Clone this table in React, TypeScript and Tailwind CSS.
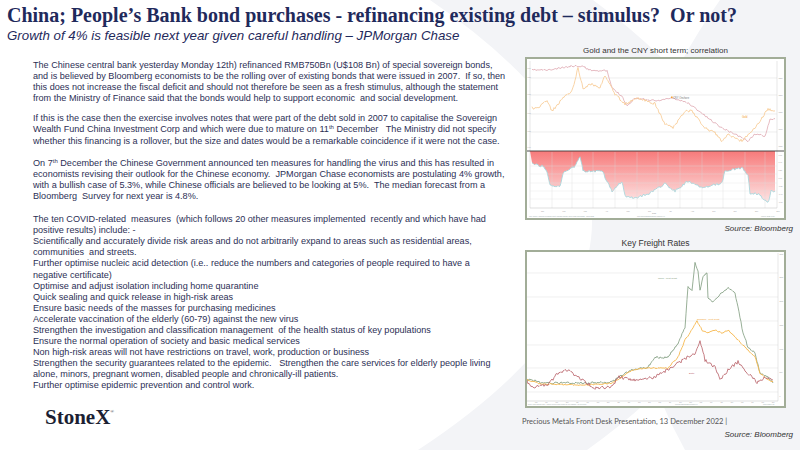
import React from 'react';

type Pt = [number, number];

// deterministic noise so the chart lines look like market data
function rng(seed: number) {
  let s = seed;
  return () => {
    s = (s * 16807) % 2147483647;
    return s / 2147483647;
  };
}

function series(pts: Pt[], amp: number, seed: number, step = 1): string {
  const r = rng(seed);
  const out: string[] = [];
  for (let i = 0; i < pts.length - 1; i++) {
    const [x0, y0] = pts[i];
    const [x1, y1] = pts[i + 1];
    const n = Math.max(1, Math.round((x1 - x0) / step));
    for (let k = 0; k < n; k++) {
      const t = k / n;
      const x = x0 + (x1 - x0) * t;
      const y = y0 + (y1 - y0) * t + (r() - 0.5) * amp * 2;
      out.push(`${x.toFixed(1)},${y.toFixed(1)}`);
    }
  }
  const last = pts[pts.length - 1];
  out.push(`${last[0]},${last[1]}`);
  return out.join(' ');
}

const cnyPts: Pt[] = [
  [7, 13], [25, 13], [47, 9], [57, 9], [65, 13], [82, 14], [87, 31], [97, 39], [102, 49], [110, 41],
  [130, 44], [147, 41], [163, 46], [170, 51], [183, 61], [197, 71], [210, 77], [223, 84], [230, 77],
  [240, 79], [245, 62], [250, 62],
];
const goldPts: Pt[] = [
  [7, 51], [13, 51], [22, 44], [27, 54], [40, 39], [47, 34], [53, 11], [58, 31], [67, 27], [75, 31],
  [80, 19], [90, 37], [100, 47], [113, 41], [130, 47], [140, 67], [148, 71], [160, 54], [167, 54],
  [180, 71], [190, 76], [197, 84], [203, 77], [217, 84], [227, 74], [233, 67], [243, 52], [250, 54],
];
const corrPts: Pt[] = [
  [7, 107], [17, 109], [22, 114], [25, 129], [35, 129], [38, 116], [50, 109], [55, 99], [58, 114],
  [77, 114], [87, 134], [97, 124], [100, 139], [110, 141], [123, 137], [140, 127], [150, 134],
  [163, 124], [177, 131], [197, 126], [200, 114], [217, 111], [223, 118], [225, 136], [233, 137],
  [243, 146], [246, 134], [250, 134],
];

const westPts: Pt[] = [
  [2, 130], [7, 130], [17, 133], [30, 133], [63, 133], [87, 132], [97, 125], [107, 120], [123, 117],
  [130, 107], [137, 108], [143, 107], [153, 93], [160, 77], [163, 37], [167, 40], [170, 13], [173, 20],
  [175, 40], [178, 27], [182, 23], [183, 47], [188, 53], [192, 47], [197, 43], [203, 38], [210, 43],
  [213, 57], [218, 83], [223, 97], [230, 103], [235, 123], [243, 127], [248, 133],
];
const shanghaiPts: Pt[] = [
  [2, 130], [17, 134], [63, 135], [87, 133], [97, 127], [107, 120], [123, 118], [143, 118], [153, 107],
  [160, 90], [167, 80], [172, 71], [177, 80], [183, 83], [190, 80], [197, 83], [203, 80], [213, 90],
  [223, 100], [230, 107], [235, 123], [243, 130], [248, 132],
];
const balticPts: Pt[] = [
  [2, 132], [7, 137], [23, 135], [33, 123], [42, 120], [57, 130], [70, 138], [87, 137], [93, 127],
  [110, 130], [130, 127], [147, 117], [163, 107], [170, 103], [175, 90], [180, 110], [190, 117],
  [195, 130], [203, 120], [213, 112], [223, 123], [232, 132], [240, 127], [248, 130],
];

const cnyLine = series(cnyPts, 0.9, 11);
const goldLine = series(goldPts, 1.3, 29);
const corrLine = series(corrPts, 1.2, 47);
const westLine = series(westPts, 1.1, 53);
const shanghaiLine = series(shanghaiPts, 0.7, 71);
const balticLine = series(balticPts, 1.6, 97);

const months = ['Jan', 'Feb', 'Mar', 'Apr', 'May', 'Jun', 'Jul', 'Aug', 'Sep', 'Oct', 'Nov', 'Dec'];

function GoldCnyChart() {
  const hGrid1 = [21, 38, 57, 75];
  const hGrid2 = [109, 117, 126, 134, 142];
  const vGrid = [27, 47, 68, 90, 112, 133, 155, 177, 198, 220, 240];
  const leftTicks = ['6.90', '6.80', '6.70', '6.60', '6.50', '6.40'];
  const rightTicks = ['1850', '1800', '1750', '1700', '1650'];
  const corrTicks = ['0.60', '0.40', '0.20', '0.00', '-0.20', '-0.40', '-0.60'];
  return (
    <div className="w-[261px] h-[163px] border-2 border-[#a2ad98] bg-white">
      <svg
        viewBox="2 2 257 159"
        className="w-full h-full block [font-family:'Liberation_Sans',Arial,sans-serif]"
        preserveAspectRatio="none"
      >
        <defs>
          <linearGradient id="corrFill" x1="0" y1="0" x2="0" y2="1">
            <stop offset="0" stopColor="#f77a7a" />
            <stop offset="1" stopColor="#fde4e4" />
          </linearGradient>
        </defs>
        {hGrid1.map((y) => (
          <line key={y} x1={5} x2={252} y1={y} y2={y} stroke="#e3e3e3" strokeWidth={0.6} />
        ))}
        <line x1={5} x2={5} y1={4} y2={151} stroke="#cfcfcf" strokeWidth={0.5} />
        <line x1={252} x2={252} y1={4} y2={151} stroke="#cfcfcf" strokeWidth={0.5} />
        <polyline points={cnyLine} fill="none" stroke="#e0aab2" strokeWidth={0.8} />
        <polyline points={goldLine} fill="none" stroke="#f7c990" strokeWidth={0.8} />
        <rect x={146} y={39.5} width={1.6} height={1.6} fill="#f0a030" />
        <text x={148} y={42} fontSize={2.6} fill="#777">CNY Onshore</text>
        <text x={217} y={61} fontSize={2.6} fill="#f0a030">Gold</text>

        <path d={`M5,94 L${corrLine} L250,94 Z`} fill="url(#corrFill)" />
        <polyline points={corrLine} fill="none" stroke="#9ed6dc" strokeWidth={0.8} />
        {hGrid2.map((y) => (
          <line key={y} x1={5} x2={252} y1={y} y2={y} stroke="#e0e0e0" strokeWidth={0.5} opacity={0.7} />
        ))}
        {vGrid.map((x) => (
          <line key={x} x1={x} x2={x} y1={95} y2={151} stroke="#d8d8d8" strokeWidth={0.5} opacity={0.7} />
        ))}
        <line x1={2} x2={259} y1={94} y2={94} stroke="#3a3a3a" strokeWidth={0.9} />
        <line x1={5} x2={252} y1={151} y2={151} stroke="#bdbdbd" strokeWidth={0.5} />

        {[12, 21, 38, 57, 75, 91].map((y, i) => (
          <text key={i} x={2.5} y={y} fontSize={1.6} fill="#999">{leftTicks[i]}</text>
        ))}
        {[22, 39, 56, 73, 90].map((y, i) => (
          <text key={i} x={253.5} y={y} fontSize={1.8} fill="#999">{rightTicks[i]}</text>
        ))}
        {[99, 106, 114, 122, 130, 138, 146].map((y, i) => (
          <text key={i} x={253.5} y={y} fontSize={1.8} fill="#999">{corrTicks[i]}</text>
        ))}
        {months.map((m, i) => (
          <text key={m} x={16 + i * 21.4} y={154.5} fontSize={1.8} fill="#999">{m}</text>
        ))}
        <text x={127} y={156.5} fontSize={1.8} fill="#999">2022</text>
        <text x={4} y={159.5} fontSize={1.6} fill="#9aa">
          CNY Curncy (Chinese Renminbi Spot)  GOLDS Comdty  Correl 20D  12/09/2022 - 12/09/2022
        </text>
        <text x={112} y={159.5} fontSize={1.6} fill="#9aa">Copyright 2022 Bloomberg Finance L.P.</text>
        <text x={236} y={159.5} fontSize={1.6} fill="#9aa">12-Dec-2022 14:20</text>
      </svg>
    </div>
  );
}

function FreightChart() {
  const hGrid = [23, 47, 71, 95, 118, 142];
  const yTicks = ['3000', '2500', '2000', '1500', '1000', '500', '0'];
  return (
    <div className="w-[261px] h-[158px] border-2 border-[#a2ad98] bg-white">
      <svg
        viewBox="2 2 257 154"
        className="w-full h-full block [font-family:'Liberation_Sans',Arial,sans-serif]"
        preserveAspectRatio="none"
      >
        {hGrid.map((y) => (
          <line key={y} x1={2} x2={253} y1={y} y2={y} stroke="#e6e6e6" strokeWidth={0.6} />
        ))}
        <line x1={253} x2={253} y1={3} y2={151} stroke="#cfcfcf" strokeWidth={0.5} />
        <line x1={2} x2={253} y1={151} y2={151} stroke="#bdbdbd" strokeWidth={0.5} />
        <polyline points={westLine} fill="none" stroke="#7e9a7c" strokeWidth={0.8} />
        <polyline points={shanghaiLine} fill="none" stroke="#f6b84e" strokeWidth={0.9} />
        <polyline points={balticLine} fill="none" stroke="#b85e66" strokeWidth={0.8} />
        <text x={133} y={28.5} fontSize={2.2} fill="#7e9a7c">China - West Coast</text>
        <text x={172} y={70} fontSize={2.2} fill="#f0a030">Shanghai - West Coast</text>
        <text x={164} y={124} fontSize={2.2} fill="#b85e66">Baltic</text>
        {[0, 23, 47, 71, 95, 118, 142].map((y, i) => (
          <text key={i} x={254.5} y={y + 4.5} fontSize={1.7} fill="#999">{yTicks[i]}</text>
        ))}
        {Array.from({ length: 24 }).map((_, i) => (
          <text key={i} x={10 + i * 10.3} y={153.4} fontSize={1.4} fill="#999">
            {['Mar', 'Jun', 'Sep', 'Dec'][i % 4]}
          </text>
        ))}
        <text x={3} y={155.4} fontSize={1.3} fill="#9aa">
          Drewry World Container Index - China to US West Coast Freight rate  (R1)  Shanghai - US West Coast
        </text>
        <text x={150} y={155.4} fontSize={1.3} fill="#9aa">Copyright 2022 Bloomberg Finance L.P.</text>
        <text x={238} y={155.4} fontSize={1.3} fill="#9aa">12-Dec-2022 14:22</text>
      </svg>
    </div>
  );
}

function Watermark() {
  return (
    <svg className="absolute inset-0 w-full h-full" viewBox="0 0 800 450" preserveAspectRatio="none">
      <path d="M430,0 L593,0 Q900,225 587,450 L418,450 Q760,225 430,0 Z" fill="#f3f4f7" />
      <path d="M720,0 L800,0 L800,450 L685,450 Q560,225 720,0 Z" fill="#f3f4f7" />
    </svg>
  );
}

const intro = [
  'The Chinese central bank yesterday Monday 12th) refinanced RMB750Bn (U$108 Bn) of special sovereign bonds,',
  'and is believed by Bloomberg economists to be the rolling over of existing bonds that were issued in 2007.  If so, then',
  'this does not increase the fiscal deficit and should not therefore be seen as a fresh stimulus, although the statement',
  'from the Ministry of Finance said that the bonds would help to support economic  and social development.',
];

const measures = [
  'Scientifically and accurately divide risk areas and do not arbitrarily expand to areas such as residential areas,',
  'communities  and streets.',
  'Further optimise nucleic acid detection (i.e.. reduce the numbers and categories of people required to have a',
  'negative certificate)',
  'Optimise and adjust isolation including home quarantine',
  'Quick sealing and quick release in high-risk areas',
  'Ensure basic needs of the masses for purchasing medicines',
  'Accelerate vaccination of the elderly (60-79) against the new virus',
  'Strengthen the investigation and classification management  of the health status of key populations',
  'Ensure the normal operation of society and basic medical services',
  'Non high-risk areas will not have restrictions on travel, work, production or business',
  'Strengthen the security guarantees related to the epidemic.   Strengthen the care services for elderly people living',
  'alone, minors, pregnant women, disabled people and chronically-ill patients.',
  'Further optimise epidemic prevention and control work.',
];

export default function App() {
  return (
    <div className="relative w-[800px] h-[450px] overflow-hidden bg-white">
      <Watermark />
      <div className="relative flex flex-col h-full">
        <div className="pl-[7px] pt-[3px] text-[#1f2a5c]">
          <h1 className="text-[20px] leading-[25px] font-bold whitespace-pre [font-family:'Liberation_Serif','Times_New_Roman',serif]">
            China; People’s Bank bond purchases - refinancing existing debt – stimulus?  Or not?
          </h1>
          <p className="text-[13.3px] leading-[16px] italic [font-family:'Liberation_Sans',Arial,sans-serif]">
            Growth of 4% is feasible next year given careful handling – JPMorgan Chase
          </p>
        </div>

        <div className="flex flex-1">
          <div className="flex flex-col pl-[33px] pt-[16px] w-[525px] text-[9.1px] leading-[11.1px] text-[#2c2f55] whitespace-pre [font-family:'Liberation_Sans',Arial,sans-serif]">
            {intro.map((l) => (
              <span key={l}>{l}</span>
            ))}
            <span className="mt-[9px]">
              If this is the case then the exercise involves notes that were part of the debt sold in 2007 to capitalise the Sovereign
            </span>
            <span>
              Wealth Fund China Investment Corp and which were due to mature on 11<sup className="text-[6px]">th</sup> December   The Ministry did not specify
            </span>
            <span>whether this financing is a rollover, but the size and dates would be a remarkable coincidence if it were not the case.</span>
            <span className="mt-[11px]">
              On 7<sup className="text-[6px]">th</sup> December the Chinese Government announced ten measures for handling the virus and this has resulted in
            </span>
            <span>economists revising their outlook for the Chinese economy.  JPMorgan Chase economists are postulating 4% growth,</span>
            <span>with a bullish case of 5.3%, while Chinese officials are believed to be looking at 5%.  The median forecast from a</span>
            <span>Bloomberg  Survey for next year is 4.8%.</span>
            <span className="mt-[12px]">
              The ten COVID-related  measures  (which follows 20 other measures implemented  recently and which have had
            </span>
            <span>positive results) include: -</span>
            {measures.map((l) => (
              <span key={l}>{l}</span>
            ))}

            <div className="mt-[14px] ml-[12px] flex items-start text-[#1c1f33] [font-family:'Liberation_Serif','Times_New_Roman',serif]">
              <span className="text-[21px] leading-[22px] font-semibold">StoneX</span>
              <span className="text-[5px] leading-[8px] mt-[2px]">®</span>
            </div>
          </div>

          <div className="flex flex-col w-[272px] pt-[1px] [font-family:'Liberation_Sans',Arial,sans-serif]">
            <div className="w-[261px] text-center text-[8px] leading-[12px] text-[#333]">
              Gold and the CNY short term; correlation
            </div>
            <GoldCnyChart />
            <div className="text-right pr-[4px] mt-[4px] text-[8px] leading-[10px] italic text-[#333]">
              Source:  Bloomberg
            </div>
            <div className="w-[261px] text-center text-[8.5px] leading-[13px] mt-[3px] text-[#333]">
              Key Freight Rates
            </div>
            <FreightChart />
            <div className="mt-[8px] -ml-[3px] text-[7.5px] leading-[12px] text-[#555] [font-family:Lato,'Open_Sans',sans-serif]">
              Precious Metals Front Desk Presentation, 13 December 2022 |
            </div>
            <div className="text-right pr-[4px] mt-[2px] text-[8px] leading-[10px] italic text-[#333]">
              Source:  Bloomberg
            </div>
          </div>
        </div>
      </div>
    </div>
  );
}
